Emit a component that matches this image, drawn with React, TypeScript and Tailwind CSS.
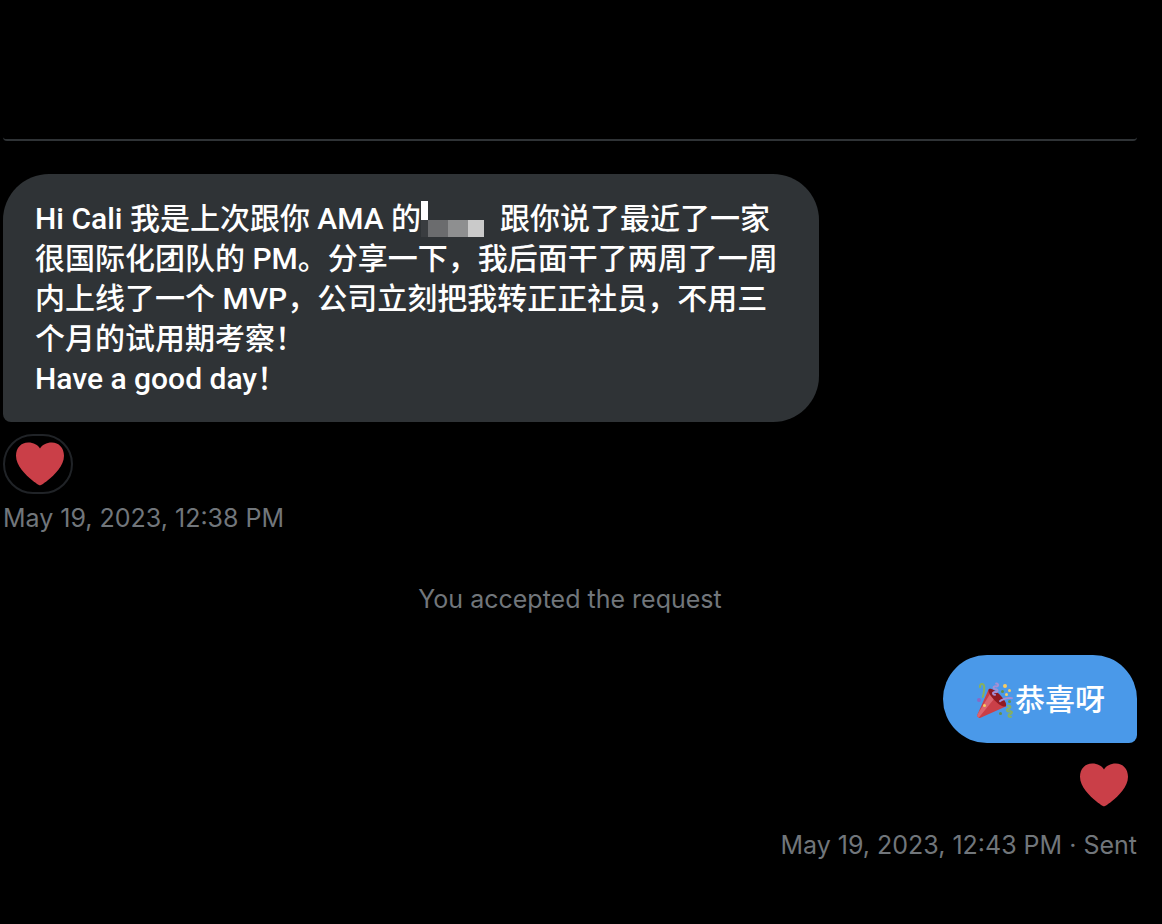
import type { ReactNode } from "react";

const FONT = "font-['Roboto','Noto_Sans_CJK_SC',sans-serif]";

function Heart() {
  return (
    <svg viewBox="0 0 48 48" className="block size-12 shrink-0" role="img" aria-label="Heart">
      <path
        fill="#ca3f48"
        d="M24 45.400C23.300 45.400 20.500 43.700 16.500 40.500C9.500 35 0 25.800 0 15.800C0 8 5.200 2.600 12.200 2.600C17.500 2.600 22 5.200 24 8.400C26 5.200 30.500 2.600 35.800 2.600C42.800 2.600 48 8 48 15.800C48 25.800 38.500 35 31.500 40.500C27.500 43.700 24.700 45.400 24 45.400Z"
      />
    </svg>
  );
}

function PartyPopper() {
  return (
    <svg viewBox="0 0 36 36" className="mx-0.5 size-9 shrink-0" role="img" aria-label="Party popper">
      <path fill="#ca3f48" d="M11.626 7.488c-.112.112-.197.247-.268.395l-.008-.008L.134 33.141l.011.011c-.208.403.14 1.223.853 1.937.713.713 1.533 1.061 1.936.853l.01.01L28.21 24.735l-.008-.009c.147-.07.282-.155.395-.269 1.562-1.562-.971-6.627-5.656-11.313-4.687-4.686-9.752-7.218-11.315-5.656z" />
      <path fill="#da6570" d="M13 12L.416 32.506l-.282.635.011.011c-.208.403.14 1.223.853 1.937.232.232.473.408.709.557L17 17l-4-5z" />
      <path fill="#901a22" d="M23.012 13.066c4.67 4.672 7.263 9.652 5.789 11.124-1.473 1.474-6.453-1.118-11.126-5.788-4.671-4.672-7.263-9.654-5.79-11.127 1.474-1.473 6.454 1.119 11.127 5.791z" />
      <path fill="#a58fd4" d="M18.59 13.609c-.199.161-.459.245-.734.215-.868-.094-1.598-.396-2.109-.873-.541-.505-.808-1.183-.735-1.862.128-1.192 1.324-2.286 3.363-2.066.793.085 1.147-.17 1.159-.292.014-.121-.277-.446-1.07-.532-.868-.094-1.598-.396-2.11-.873-.541-.505-.809-1.183-.735-1.862.13-1.192 1.325-2.286 3.362-2.065.578.062.883-.057 1.012-.134.103-.063.144-.123.148-.158.012-.121-.275-.446-1.07-.532-.549-.06-.947-.552-.886-1.102.059-.549.55-.946 1.101-.886 2.037.219 2.973 1.542 2.844 2.735-.13 1.194-1.325 2.286-3.364 2.067-.578-.063-.88.057-1.01.134-.103.062-.145.123-.149.157-.013.122.276.446 1.071.532 2.037.22 2.973 1.542 2.844 2.735-.129 1.192-1.324 2.286-3.362 2.065-.578-.062-.882.058-1.012.134-.104.064-.144.124-.148.158-.013.121.276.446 1.07.532.548.06.947.553.886 1.102-.028.274-.167.511-.366.671z" />
      <path fill="#86b060" d="M30.661 22.857c1.973-.557 3.334.323 3.658 1.478.324 1.154-.378 2.615-2.35 3.17-.77.216-1.001.584-.97.701.034.118.425.312 1.193.095 1.972-.555 3.333.325 3.657 1.479.326 1.155-.378 2.614-2.351 3.17-.769.216-1.001.585-.967.702.033.117.423.311 1.192.095.53-.149 1.084.16 1.233.691.148.532-.161 1.084-.693 1.234-1.971.555-3.333-.323-3.659-1.479-.324-1.154.379-2.613 2.353-3.169.77-.217 1.001-.584.967-.702-.032-.117-.422-.312-1.19-.096-1.974.556-3.334-.322-3.659-1.479-.325-1.154.378-2.613 2.351-3.17.768-.215.999-.585.967-.701-.034-.118-.423-.312-1.192-.096-.532.15-1.083-.16-1.233-.691-.149-.53.161-1.082.693-1.232z" />
      <path fill="#a58fd4" d="M23.001 20.16c-.294 0-.584-.129-.782-.375-.345-.432-.274-1.061.156-1.406.218-.175 5.418-4.259 12.767-3.208.547.078.927.584.849 1.131-.078.546-.58.93-1.132.848-6.493-.922-11.187 2.754-11.233 2.791-.186.148-.406.219-.625.219z" />
      <path fill="#86b060" d="M5.754 16c-.095 0-.192-.014-.288-.042-.529-.159-.829-.716-.67-1.245 1.133-3.773 2.16-9.794.898-11.364-.141-.178-.354-.353-.842-.316-.938.072-.849 2.051-.848 2.071.042.551-.372 1.031-.922 1.072-.559.034-1.031-.372-1.072-.923-.103-1.379.326-4.035 2.692-4.214 1.056-.08 1.933.287 2.552 1.057 2.371 2.951-.036 11.506-.542 13.192-.13.433-.528.712-.958.712z" />
      <circle fill="#698f47" cx="25.5" cy="9.5" r="1.5" />
      <circle fill="#8b68c5" cx="2" cy="18" r="2" />
      <circle fill="#698f47" cx="32.5" cy="19.5" r="1.5" />
      <circle fill="#698f47" cx="23.5" cy="31.5" r="1.5" />
      <circle fill="#f8cd62" cx="28" cy="4" r="2" />
      <circle fill="#f8cd62" cx="32.5" cy="8.5" r="1.5" />
      <circle fill="#f8cd62" cx="29.5" cy="12.5" r="1.5" />
      <circle fill="#f8cd62" cx="7.5" cy="23.5" r="1.5" />
    </svg>
  );
}

/* Pixelated block that hides the sender's name */
function RedactedName() {
  return (
    <svg viewBox="0 0 63 40" className="mr-4 inline-block h-10 w-[63px] align-middle" aria-hidden="true" shapeRendering="crispEdges">
      <rect x="0" y="0" width="7" height="19" fill="#fff" />
      <rect x="0" y="19" width="7" height="17" fill="#3a3d40" />
      <rect x="7" y="19" width="20" height="17" fill="#6b6c6e" />
      <rect x="27" y="19" width="20" height="17" fill="#8e8f90" />
      <rect x="47" y="19" width="16" height="17" fill="#cacaca" />
    </svg>
  );
}

function Meta({ children }: { children: ReactNode }) {
  return <p className="font-['Inter',sans-serif] text-[25px] leading-8 text-[#71767b]">{children}</p>;
}

export default function App() {
  return (
    <main className={`min-h-screen bg-black pr-[25px] pb-16 pl-[3px] ${FONT}`}>
      <header className="h-[141px] rounded-b-sm border-b-2 border-[#2f3336]" />

      <section className="mt-[33px] flex flex-col items-start">
        <div className="w-[72%] rounded-[46px] rounded-bl-lg bg-[#2f3336] px-8 pt-[25px] pb-[23px] text-[30px] leading-10 font-medium whitespace-nowrap text-white">
          <p className="h-10">
            Hi Cali 我是上次跟你 AMA 的<RedactedName />跟你说了最近了一家
          </p>
          <p>很国际化团队的 PM。分享一下，我后面干了两周了一周</p>
          <p>内上线了一个 MVP，公司立刻把我转正正社员，不用三</p>
          <p>个月的试用期考察！</p>
          <p>Have a good day！</p>
        </div>
        <button
          type="button"
          aria-label="Heart reaction"
          className="mt-3 flex h-[60px] w-[70px] items-center justify-center rounded-full border-2 border-[#202327] pl-1"
        >
          <Heart />
        </button>
        <div className="mt-2">
          <Meta>May 19, 2023, 12:38 PM</Meta>
        </div>
      </section>

      <div className="mt-[49px] text-center">
        <Meta>You accepted the request</Meta>
      </div>

      <section className="mt-10 flex flex-col items-end">
        <div className="flex items-center rounded-[44px] rounded-br-lg bg-[#4a99e9] px-8 pt-[25px] pb-[23px] text-[30px] leading-10 font-medium text-white">
          <PartyPopper />
          <span>恭喜呀</span>
        </div>
        <button type="button" aria-label="Heart reaction" className="mt-[18px] mr-[9px]">
          <Heart />
        </button>
        <div className="mt-5">
          <Meta>May 19, 2023, 12:43 PM · Sent</Meta>
        </div>
      </section>
    </main>
  );
}
